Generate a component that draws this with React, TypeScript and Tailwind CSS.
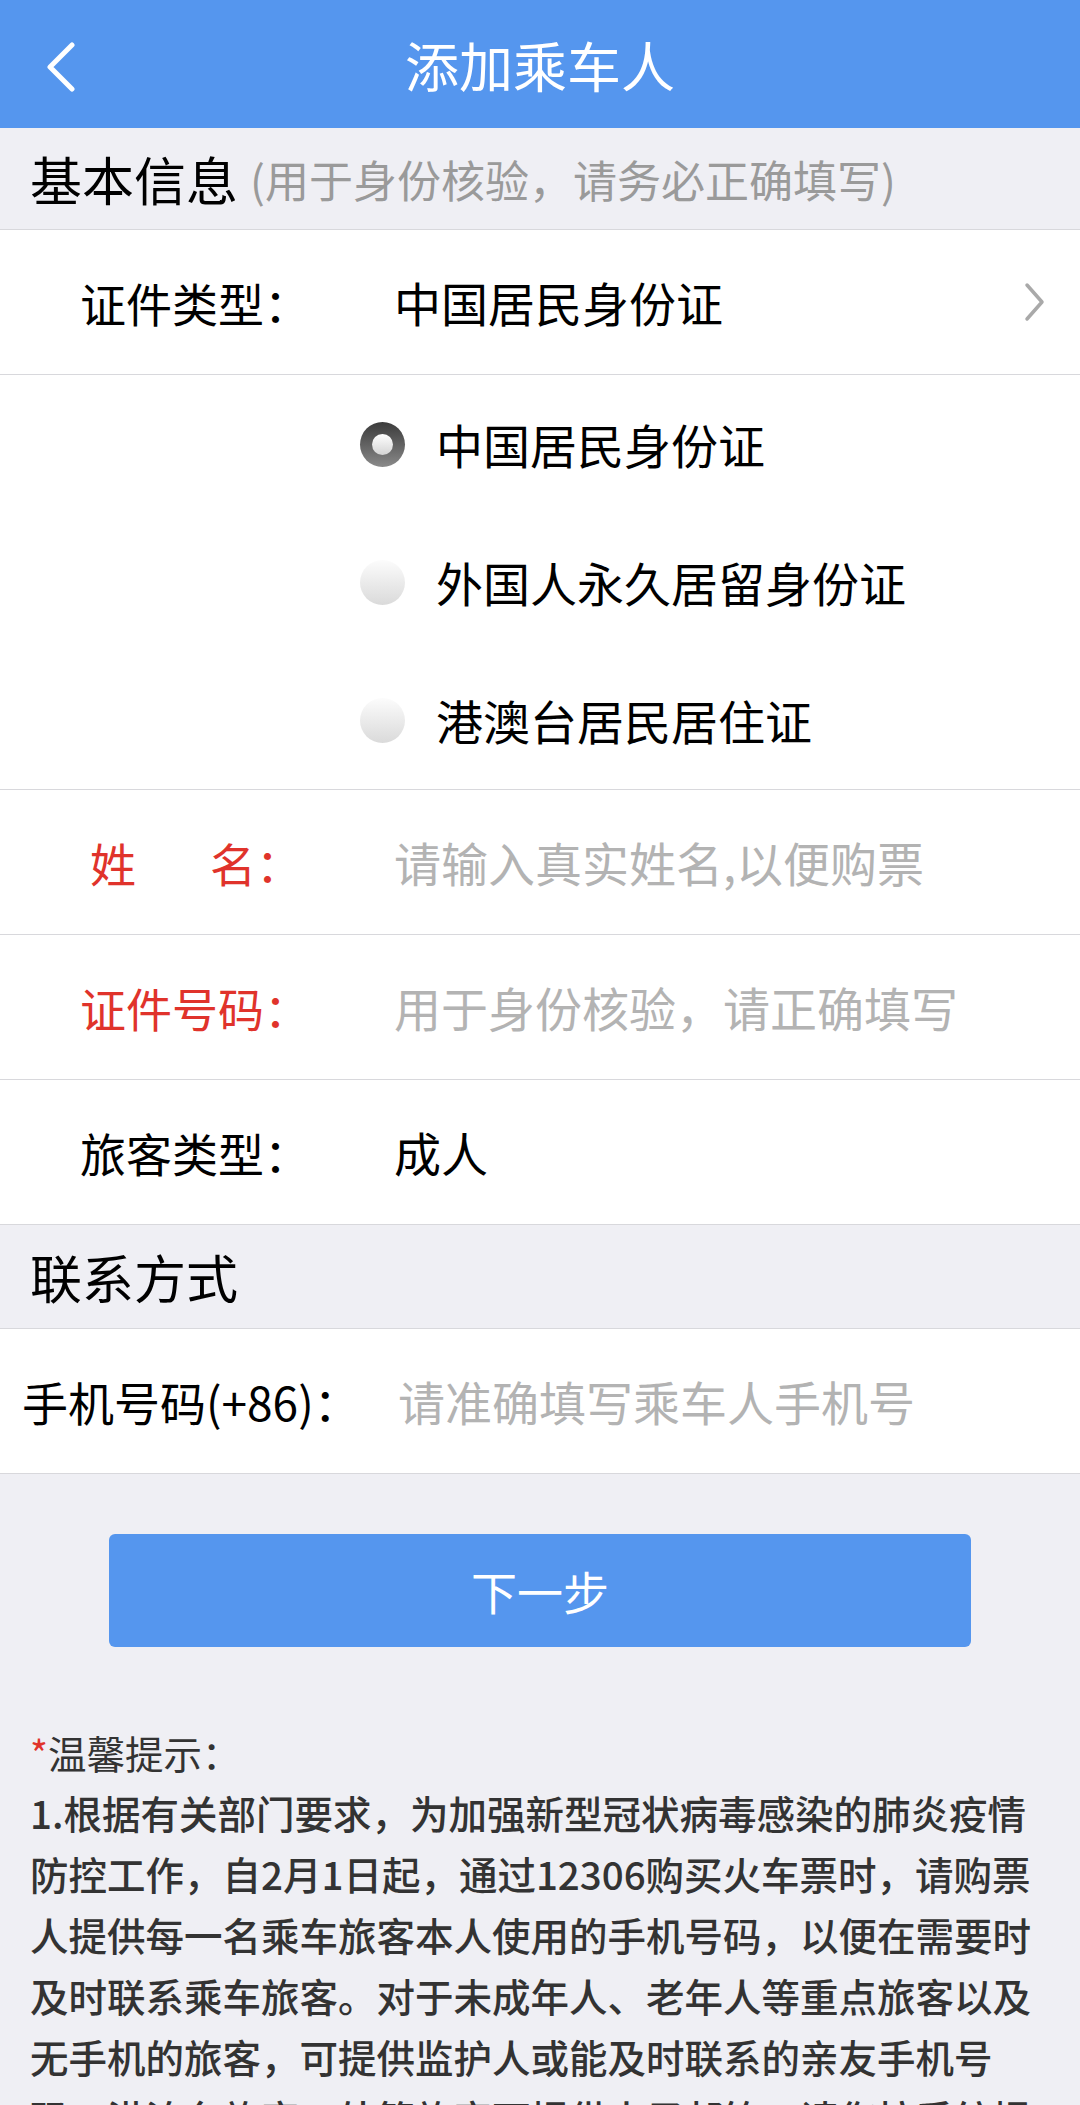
import { useState } from "react";

const font = {
  fontFamily: '"Noto Sans CJK SC", "Noto Sans", sans-serif',
};

const idTypes = ["中国居民身份证", "外国人永久居留身份证", "港澳台居民居住证"];

const tips = [
  "1.根据有关部门要求，为加强新型冠状病毒感染的肺炎疫情",
  "防控工作，自2月1日起，通过12306购买火车票时，请购票",
  "人提供每一名乘车旅客本人使用的手机号码，以便在需要时",
  "及时联系乘车旅客。对于未成年人、老年人等重点旅客以及",
  "无手机的旅客，可提供监护人或能及时联系的亲友手机号",
  "码：港澳台旅客，外籍旅客可提供电子邮箱，请您按系统提",
];

const Radio = ({ checked }: { checked: boolean }) =>
  checked ? (
    <span className="flex h-[45px] w-[45px] items-center justify-center rounded-full bg-linear-to-b from-[#3c3c3c] to-[#8a8a8a]">
      <span className="h-[21px] w-[21px] rounded-full bg-linear-to-b from-[#ffffff] to-[#d4d4d4]" />
    </span>
  ) : (
    <span className="h-[45px] w-[45px] rounded-full bg-linear-to-b from-[#fcfcfc] to-[#dadada]" />
  );

const App = () => {
  const [idType, setIdType] = useState(0);

  return (
    <div className="min-h-[2105px] w-[1080px] bg-[#efeff4]" style={font}>
      {/* Top bar */}
      <div className="relative flex h-[128px] items-center justify-center bg-[#5596ee]">
        <button className="absolute left-[38px] top-[38px] p-1">
          <svg width="36" height="50" viewBox="0 0 36 50" fill="none">
            <path
              d="M30 3 L8 25 L30 47"
              stroke="white"
              strokeWidth="5"
              strokeLinecap="round"
              strokeLinejoin="round"
            />
          </svg>
        </button>
        <h1 className="text-[54px] font-normal text-white">添加乘车人</h1>
      </div>

      {/* 基本信息 */}
      <div className="flex h-[102px] items-center border-b border-[#d8d8dc] pl-[30px]">
        <span className="text-[52px] text-black">基本信息</span>
        <span className="ml-3 text-[44px] text-[#9a9a9a]">
          (用于身份核验，请务必正确填写)
        </span>
      </div>

      <div className="bg-white">
        <div className="flex h-[145px] items-center border-b border-[#d8d8dc]">
          <span className="w-[394px] shrink-0 pl-[80px] text-[46px] text-black">
            证件类型：
          </span>
          <span className="flex-1 text-[47px] text-black">
            {idTypes[0]}
          </span>
          <svg
            className="mr-[33px]"
            width="24"
            height="40"
            viewBox="0 0 24 40"
            fill="none"
          >
            <path
              d="M4 3 L19 20 L4 37"
              stroke="#a9a9a9"
              strokeWidth="3.5"
              strokeLinecap="round"
              strokeLinejoin="round"
            />
          </svg>
        </div>

        <div className="border-b border-[#d8d8dc]">
          {idTypes.map((t, i) => (
            <div
              key={t}
              onClick={() => setIdType(i)}
              className="flex h-[138px] cursor-pointer items-center pl-[360px]"
            >
              <Radio checked={idType === i} />
              <span className="ml-[31px] text-[47px] text-black">{t}</span>
            </div>
          ))}
        </div>

        <div className="flex h-[145px] items-center border-b border-[#d8d8dc]">
          <span className="w-[394px] shrink-0 pl-[90px] text-[46px] text-[#e0332b]">
            姓<span className="ml-[74px]">名：</span>
          </span>
          <span className="text-[47px] text-[#b3b3b3]">
            请输入真实姓名,以便购票
          </span>
        </div>

        <div className="flex h-[145px] items-center border-b border-[#d8d8dc]">
          <span className="w-[394px] shrink-0 pl-[80px] text-[46px] text-[#e0332b]">
            证件号码：
          </span>
          <span className="text-[47px] text-[#b3b3b3]">
            用于身份核验，请正确填写
          </span>
        </div>

        <div className="flex h-[145px] items-center border-b border-[#d8d8dc]">
          <span className="w-[394px] shrink-0 pl-[80px] text-[46px] text-black">
            旅客类型：
          </span>
          <span className="text-[47px] text-black">成人</span>
        </div>
      </div>

      {/* 联系方式 */}
      <div className="flex h-[104px] items-center border-b border-[#d8d8dc] pl-[30px]">
        <span className="text-[52px] text-black">联系方式</span>
      </div>

      <div className="flex h-[145px] items-center border-b border-[#d8d8dc] bg-white">
        <span className="w-[398px] shrink-0 pl-[22px] text-[46px] text-black">
          手机号码(+86)：
        </span>
        <span className="text-[47px] text-[#b3b3b3]">
          请准确填写乘车人手机号
        </span>
      </div>

      <div className="mt-[60px] flex justify-center">
        <button className="h-[113px] w-[862px] rounded-[6px] bg-[#5596ee] text-[46px] text-white">
          下一步
        </button>
      </div>

      {/* 温馨提示 */}
      <div className="mt-[75px] px-[30px] text-[38.5px] leading-[61px] text-[#333333]">
        <div className="-mb-[1px]">
          <span className="text-[#e0332b]">*</span>温馨提示：
        </div>
        <div className="font-medium">
          {tips.map((line) => (
            <div key={line} className="whitespace-nowrap">
              {line}
            </div>
          ))}
        </div>
      </div>
    </div>
  );
};

export default App;
